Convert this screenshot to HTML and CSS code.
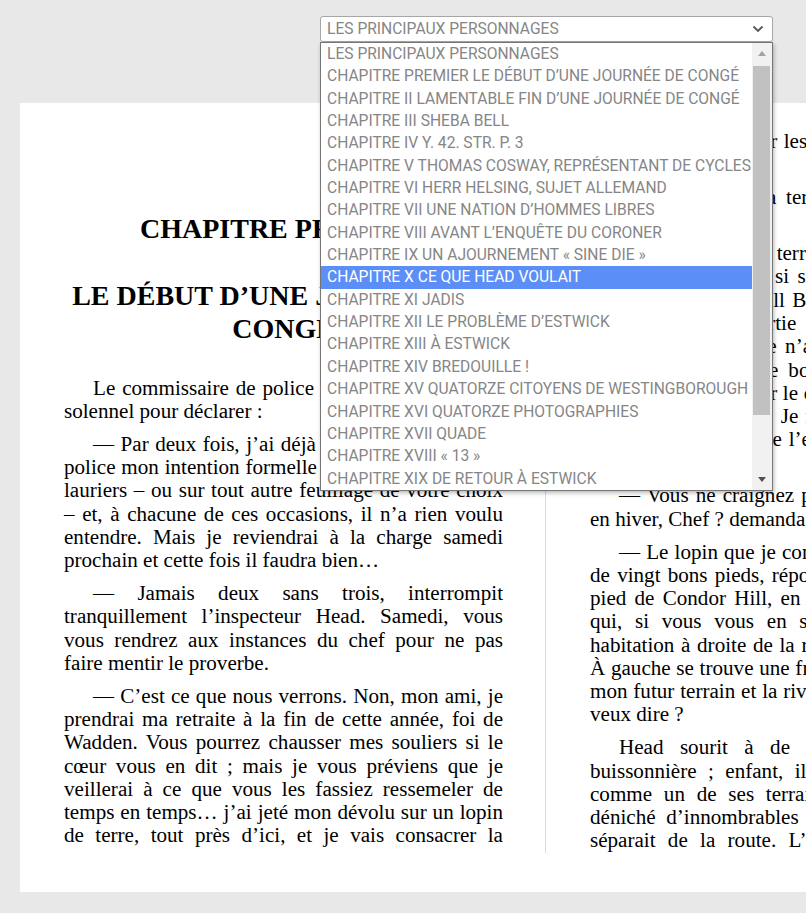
FILE: index.html
```html
<!DOCTYPE html>
<html lang="fr">
<head>
<meta charset="utf-8">
<title>Chapitre premier – Le début d’une journée de congé</title>
<link rel="stylesheet" href="styles.css">
</head>
<body>
<header class="toolbar">
  <div class="chapter-select">
    <div class="select-box">
      <span class="select-value">LES PRINCIPAUX PERSONNAGES</span>
      <svg class="chevron" width="12" height="8" viewBox="0 0 12 8"><path d="M1.5 1.5 L6 6 L10.5 1.5" fill="none" stroke="#555" stroke-width="1.8"/></svg>
    </div>
    <div class="listbox">
      <ul class="options">
        <li>LES PRINCIPAUX PERSONNAGES</li>
        <li>CHAPITRE PREMIER LE DÉBUT D’UNE JOURNÉE DE CONGÉ</li>
        <li>CHAPITRE II LAMENTABLE FIN D’UNE JOURNÉE DE CONGÉ</li>
        <li>CHAPITRE III SHEBA BELL</li>
        <li>CHAPITRE IV Y. 42. STR. P. 3</li>
        <li>CHAPITRE V THOMAS COSWAY, REPRÉSENTANT DE CYCLES</li>
        <li>CHAPITRE VI HERR HELSING, SUJET ALLEMAND</li>
        <li>CHAPITRE VII UNE NATION D’HOMMES LIBRES</li>
        <li>CHAPITRE VIII AVANT L’ENQUÊTE DU CORONER</li>
        <li>CHAPITRE IX UN AJOURNEMENT « SINE DIE »</li>
        <li class="selected">CHAPITRE X CE QUE HEAD VOULAIT</li>
        <li>CHAPITRE XI JADIS</li>
        <li>CHAPITRE XII LE PROBLÈME D’ESTWICK</li>
        <li>CHAPITRE XIII À ESTWICK</li>
        <li>CHAPITRE XIV BREDOUILLE !</li>
        <li>CHAPITRE XV QUATORZE CITOYENS DE WESTINGBOROUGH</li>
        <li>CHAPITRE XVI QUATORZE PHOTOGRAPHIES</li>
        <li>CHAPITRE XVII QUADE</li>
        <li>CHAPITRE XVIII « 13 »</li>
        <li>CHAPITRE XIX DE RETOUR À ESTWICK</li>
      </ul>
      <div class="scrollbar">
        <div class="sb-btn"><svg width="8" height="5" viewBox="0 0 8 5"><path d="M0 5 L4 0 L8 5 Z" fill="#a3a3a3"/></svg></div>
        <div class="sb-track"><div class="sb-thumb"></div></div>
        <div class="sb-btn"><svg width="8" height="5" viewBox="0 0 8 5"><path d="M0 0 L8 0 L4 5 Z" fill="#505050"/></svg></div>
      </div>
    </div>
  </div>
</header>

<main class="page">
  <section class="column">
    <h2 class="chapter-num">CHAPITRE PREMIER</h2>
    <h3 class="chapter-title">LE DÉBUT D’UNE JOURNÉE DE CONGÉ</h3>
    <p>Le commissaire de police Wadden se leva, l’air solennel pour déclarer&nbsp;:</p>
    <p>— Par deux fois, j’ai déjà signifié au chef de la police mon intention formelle de me reposer sur les lauriers – ou sur tout autre feuillage de votre choix –&nbsp;et, à chacune de ces occasions, il n’a rien voulu entendre. Mais je reviendrai à la charge samedi prochain et cette fois il faudra bien…</p>
    <p>— Jamais deux sans trois, interrompit tranquillement l’inspecteur Head. Samedi, vous vous rendrez aux instances du chef pour ne pas faire mentir le proverbe.</p>
    <p class="split">— C’est ce que nous verrons. Non, mon ami, je prendrai ma retraite à la fin de cette année, foi de Wadden. Vous pourrez chausser mes souliers si le cœur vous en dit&nbsp;; mais je vous préviens que je veillerai à ce que vous les fassiez ressemeler de temps en temps… j’ai jeté mon dévolu sur un lopin de terre, tout près d’ici, et je vais consacrer la</p>
  </section>
  <section class="column">
    <p class="cont">fin de ma vie à semer les pois et les choux de mon jardin.</p>
    <p>— Vous aimez la terre à ce point, Chef&nbsp;? fit Head, amusé.</p>
    <p>— Si je l’aime, la terre&nbsp;? Voilà vingt ans que j’y pense, et j’y bâtirai, si seulement ma femme veut bien. Notre voisin Bill Baxter nous a déjà proposé de nous céder la partie de sa propriété, celle qui longe le ruisseau&nbsp;; je n’aurai plus qu’à faire bâtir une petite maison de bois, avec un jardin sur le devant, des ruches sur le côté, et une cabane tout au fond pour mes outils. Je ne demande rien de plus&nbsp;: de la terre, de l’air, de l’eau, et loin des ordures de la ville.</p>
    <p>— Vous ne craignez pas de vous ennuyer, seul, en hiver, Chef&nbsp;? demanda Head.</p>
    <p>— Le lopin que je convoite, Head, a une façade de vingt bons pieds, répondit Wadden, il est sis au pied de Condor Hill, en bordure du chemin creux qui, si vous vous en souvenez, n’a pour toute habitation à droite de la route que la ferme Brown. À gauche se trouve une friche qui se prolonge entre mon futur terrain et la rivière. Vous voyez ce que je veux dire&nbsp;?</p>
    <p class="split">Head sourit à de vieux souvenirs d’école buissonnière&nbsp;; enfant, il avait considéré ce coin comme un de ses terrains de jeu, et il y avait déniché d’innombrables nids dans la haie qui le séparait de la route. L’inspecteur contempla les</p>
  </section>
</main>
</body>
</html>
```

FILE: styles.css
```css
html {
  overflow: hidden;
  background: #e8e8e8;
}

body {
  margin: 0;
  font-family: "Liberation Serif", "Times New Roman", serif;
}

/* ---------- chapter selector ---------- */
.toolbar {
  width: 1053px;
  margin-left: 20px;
  padding-top: 16px;
  display: flex;
  justify-content: center;
}

.chapter-select {
  position: relative;
  width: 453px;
  font-family: Roboto, "Noto Sans", sans-serif;
  font-size: 15.6px;
  color: #868686;
}

.select-box {
  box-sizing: border-box;
  height: 26px;
  padding: 0 8px 0 6px;
  border: 1px solid #a6a6a6;
  border-radius: 3px;
  background: #fff;
  display: flex;
  align-items: center;
  justify-content: space-between;
  line-height: 24px;
  white-space: nowrap;
}

.chevron {
  display: block;
}

.listbox {
  position: absolute;
  top: 26px;
  left: 0;
  z-index: 2;
  box-sizing: border-box;
  width: 453px;
  border: 1px solid #767676;
  background: #fff;
  display: flex;
  box-shadow: 1px 2px 4px rgba(0, 0, 0, 0.28);
}

.options {
  flex: 1 1 auto;
  min-width: 0;
  margin: 0;
  padding: 0;
  list-style: none;
}

.options li {
  height: 22.35px;
  line-height: 22.35px;
  padding-left: 6px;
  white-space: nowrap;
  overflow: hidden;
}

.options li.selected {
  background: #5b8ff7;
  color: #fff;
}

.scrollbar {
  flex: none;
  width: 20px;
  background: #f1f1f1;
  display: flex;
  flex-direction: column;
}

.sb-btn {
  height: 21px;
  display: flex;
  align-items: center;
  justify-content: center;
}

.sb-btn svg {
  display: block;
}

.sb-track {
  flex: 1;
  padding-top: 2px;
}

.sb-thumb {
  height: 349px;
  margin: 0 2px 0 1px;
  background: #c1c1c1;
}

/* ---------- book page ---------- */
.page {
  box-sizing: border-box;
  width: 1053px;
  margin: 61px 0 0 20px;
  padding: 27px 44px 39px;
  background: #fff;
  color: #000;
  display: flex;
  align-items: stretch;
  font-size: 21.1px;
  line-height: 1.104;
}

.column {
  flex: none;
  width: 439px;
}

.column + .column {
  margin-left: 42px;
  padding-left: 44px;
  border-left: 1px solid #dcdcdc;
}

.chapter-num,
.chapter-title {
  font-size: 28px;
  line-height: 1.2;
  font-weight: bold;
  text-align: center;
}

.chapter-num {
  margin: 82px 0 0;
}

.chapter-title {
  margin: 33px 0 31px;
}

.column p {
  margin: 0;
  text-align: justify;
  text-indent: 29px;
}

.column p + p {
  margin-top: 9.5px;
}

.column p.cont {
  text-indent: 0;
}

.column p.split {
  text-align-last: justify;
}
```
